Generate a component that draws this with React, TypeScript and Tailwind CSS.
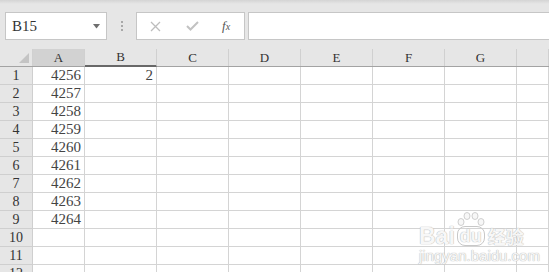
const COLS = ["A", "B", "C", "D", "E", "F", "G", ""];
const WIDTHS = ["w-[52px]", "w-[72px]", "w-[72px]", "w-[72px]", "w-[72px]", "w-[72px]", "w-[72px]", "flex-1"];

const VALUES: Record<number, { a?: string; b?: string }> = {
  1: { a: "4256", b: "2" },
  2: { a: "4257" },
  3: { a: "4258" },
  4: { a: "4259" },
  5: { a: "4260" },
  6: { a: "4261" },
  7: { a: "4262" },
  8: { a: "4263" },
  9: { a: "4264" },
};

const serif = "font-['Liberation_Serif','DejaVu_Serif',serif]";

function Toolbar() {
  return (
    <div className="relative h-[49px] bg-[#e6e6e6]">
      <div className="h-[4px] bg-gradient-to-b from-[#d4d4d4] to-[#e6e6e6]" />
      <div className="flex items-start pt-[8px]">
        <div className="ml-[5px] flex h-[28px] w-[102px] items-center border border-[#c6c6c6] bg-white pl-[6px] pr-[6px]">
          <span className={`${serif} flex-1 text-[15px] text-[#333]`}>B15</span>
          <svg width="7" height="5" viewBox="0 0 7 5">
            <path d="M0 0 H7 L3.5 4.5 Z" fill="#6e6e6e" />
          </svg>
        </div>
        <div className="ml-[14px] flex h-[28px] flex-col items-center justify-center gap-[2px]">
          <span className="h-[2px] w-[2px] bg-[#a8a8a8]" />
          <span className="h-[2px] w-[2px] bg-[#a8a8a8]" />
          <span className="h-[2px] w-[2px] bg-[#a8a8a8]" />
        </div>
        <div className="ml-[13px] flex h-[28px] w-[109px] items-center border border-[#c6c6c6] bg-white">
          <svg className="ml-[13px]" width="11" height="11" viewBox="0 0 11 11">
            <path d="M1 1 L10 10 M10 1 L1 10" stroke="#bdbdbd" strokeWidth="1.3" />
          </svg>
          <svg className="ml-[25px]" width="13" height="10" viewBox="0 0 13 10">
            <path d="M1 5 L4.5 8.5 L12 1" stroke="#c2c2c2" strokeWidth="2" fill="none" />
          </svg>
          <span className={`${serif} ml-[23px] text-[13px] italic text-[#555]`}>
            f<span className="text-[10px]">x</span>
          </span>
        </div>
        <div className="ml-[3px] h-[28px] flex-1 border-y border-l border-[#c6c6c6] bg-white" />
      </div>
    </div>
  );
}

function HeaderRow() {
  return (
    <div className="flex h-[18px] border-b border-[#a3a3a3] bg-[#e6e6e6]">
      <div className="relative w-[33px] border-r border-[#d0d0d0]">
        <svg className="absolute right-[3px] bottom-[3px]" width="10" height="10" viewBox="0 0 10 10">
          <path d="M10 0 V10 H0 Z" fill="#c4c4c4" />
        </svg>
      </div>
      {COLS.map((c, i) => (
        <div
          key={i}
          className={`${WIDTHS[i]} ${i === 0 ? "bg-[#d2d2d2]" : ""} ${
            i === 1 ? "border-b-2 border-b-[#686868] -mb-[1px]" : ""
          } flex items-end justify-center border-r border-[#d0d0d0] ${serif} text-[13px] leading-[16px] text-[#333]`}
        >
          {c}
        </div>
      ))}
    </div>
  );
}

function DataRow({ n }: { n: number }) {
  const v = VALUES[n] ?? {};
  return (
    <div className="flex h-[18px]">
      <div
        className={`flex w-[33px] items-center justify-center border-r border-b border-[#cfcfcf] bg-[#e6e6e6] ${serif} text-[14px] text-[#333]`}
      >
        {n}
      </div>
      {COLS.map((_, i) => (
        <div
          key={i}
          className={`${WIDTHS[i]} flex items-center justify-end border-r border-b border-[#d4d4d4] bg-white pr-[3px] ${serif} text-[15px] text-[#444]`}
        >
          {i === 0 ? v.a : i === 1 ? v.b : null}
        </div>
      ))}
    </div>
  );
}

function Watermark() {
  const ghost = "text-[#f7f7f7] [text-shadow:0_0_1px_#b8b8b8,0_0_1px_#b8b8b8]";
  return (
    <div className="pointer-events-none absolute left-[419px] top-[212px] flex flex-col items-start">
      <div className="flex items-end">
        <span className={`font-['Liberation_Sans',sans-serif] text-[23px] font-bold leading-[20px] ${ghost}`}>Bai</span>
        <span className="relative ml-[1px] flex flex-col items-center">
          <svg width="30" height="14" viewBox="0 0 30 14">
            <g fill="#f7f7f7" stroke="#c4c4c4" strokeWidth="0.8">
              <ellipse cx="5" cy="10" rx="3" ry="3.5" />
              <ellipse cx="11" cy="4" rx="3" ry="3.5" />
              <ellipse cx="19" cy="4" rx="3" ry="3.5" />
              <ellipse cx="25" cy="10" rx="3" ry="3.5" />
            </g>
          </svg>
          <span className={`rounded-[8px] border border-[#c8c8c8] px-[2px] font-['Liberation_Sans',sans-serif] text-[18px] font-bold leading-[18px] ${ghost}`}>
            du
          </span>
        </span>
        <span className={`ml-[2px] font-['Noto_Sans_CJK_SC',sans-serif] text-[18px] font-bold leading-[20px] ${ghost}`}>经验</span>
      </div>
      <span className={`mt-[3px] font-['Liberation_Sans',sans-serif] text-[15px] leading-[14px] ${ghost}`}>
        jingyan.baidu.com
      </span>
    </div>
  );
}

export default function App() {
  return (
    <div className="relative h-[272px] w-[549px] overflow-hidden bg-white">
      <Toolbar />
      <HeaderRow />
      {Array.from({ length: 12 }, (_, i) => (
        <DataRow key={i} n={i + 1} />
      ))}
      <Watermark />
    </div>
  );
}
